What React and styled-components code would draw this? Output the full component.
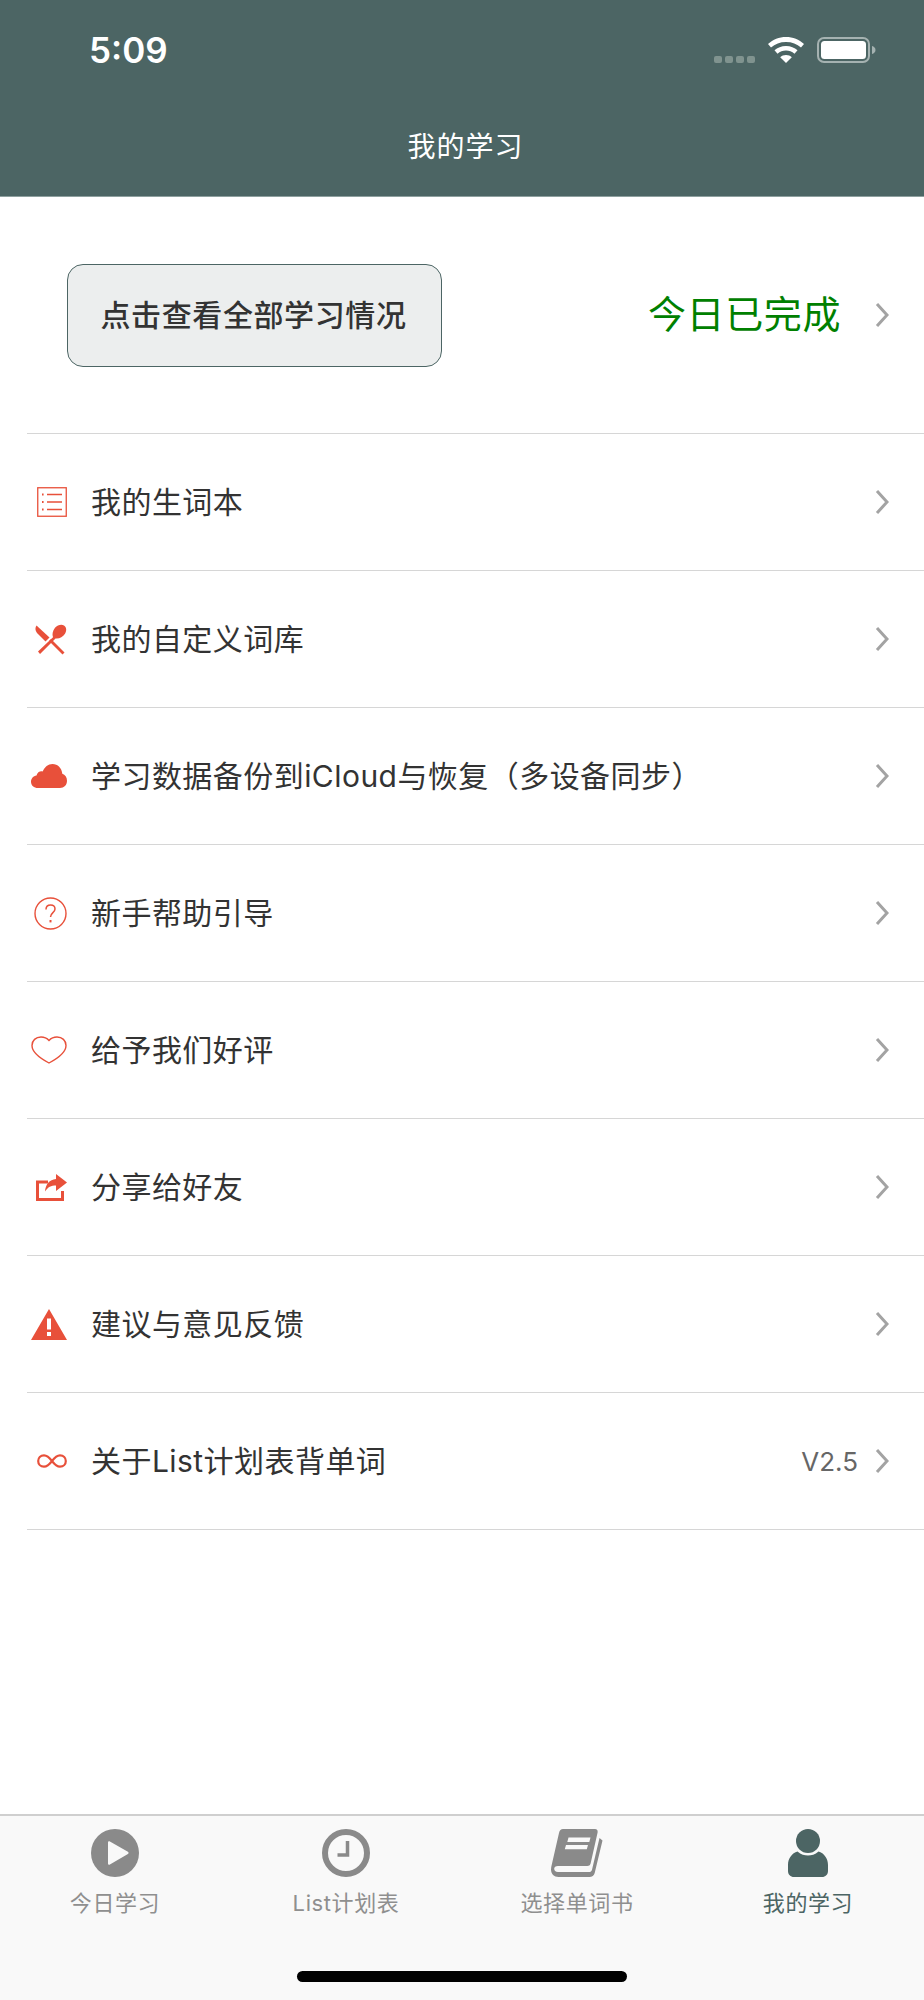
import React from "react";
import styled, { createGlobalStyle } from "styled-components";

const FONT = `Inter, "Noto Sans CJK SC", sans-serif`;
const RED = "#e8503a";
const GREY = "#8a8a8a";
const TEAL = "#4c6564";

const GlobalStyle = createGlobalStyle`
  html, body {
    margin: 0;
    padding: 0;
    background: #fff;
  }
  * {
    box-sizing: border-box;
  }
`;

const Page = styled.div`
  width: 924px;
  height: 2000px;
  display: flex;
  flex-direction: column;
  font-family: ${FONT};
  background: #fff;
  color: #333;
`;

const Header = styled.header`
  height: 197px;
  flex-shrink: 0;
  background: ${TEAL};
  border-bottom: 1px solid #8ea09f;
  color: #fff;
`;

const StatusBar = styled.div`
  height: 127px;
  padding: 32px 48px 0 89px;
  display: flex;
  justify-content: space-between;
  align-items: flex-start;
`;

const Clock = styled.div`
  font-size: 35px;
  line-height: 36px;
  font-weight: 600;
`;

const StatusIcons = styled.div`
  display: flex;
  align-items: flex-end;
  padding-top: 5px;
`;

const Dots = styled.div`
  display: flex;
  gap: 3px;
  margin-right: 13px;
`;

const Dot = styled.span`
  width: 8px;
  height: 7px;
  border-radius: 2px;
  background: #80938f;
`;

const Title = styled.h1`
  margin: 0;
  padding-left: 7px;
  text-align: center;
  font-size: 28px;
  line-height: 40px;
  font-weight: 400;
  letter-spacing: 1px;
`;

const Main = styled.main`
  flex: 1;
`;

const Summary = styled.section`
  height: 237px;
  margin-left: 27px;
  padding: 0 35px 0 40px;
  display: flex;
  align-items: center;
  border-bottom: 1px solid #d6d6d6;
`;

const ReportButton = styled.button`
  width: 375px;
  height: 103px;
  padding: 0 2px 4px 0;
  border: 1px solid ${TEAL};
  border-radius: 16px;
  background: #eceeee;
  color: #333;
  font-family: ${FONT};
  font-size: 30px;
  font-weight: 500;
  letter-spacing: 0.6px;
`;

const Done = styled.div`
  margin-left: auto;
  margin-right: 34px;
  padding-bottom: 3px;
  color: #008000;
  font-size: 38px;
  line-height: 50px;
  letter-spacing: 0.6px;
`;

const Row = styled.div`
  height: 137px;
  margin-left: 27px;
  padding-right: 35px;
  display: flex;
  align-items: center;
  border-bottom: 1px solid #d6d6d6;
`;

const IconSlot = styled.div`
  width: 40px;
  margin-right: 24px;
  display: flex;
  justify-content: flex-end;
  align-items: center;
`;

const Label = styled.div`
  flex: 1;
  font-size: 30px;
  line-height: 40px;
  letter-spacing: 0.45px;
`;

const Version = styled.div`
  margin-right: 17px;
  color: #666;
  font-size: 26px;
`;

const TabBar = styled.nav`
  height: 186px;
  flex-shrink: 0;
  padding-top: 13px;
  border-top: 2px solid #cfcfcf;
  background: #f9f9f9;
  display: flex;
  flex-direction: column;
`;

const Tabs = styled.div`
  display: grid;
  grid-template-columns: repeat(4, 1fr);
`;

const Tab = styled.div`
  display: flex;
  flex-direction: column;
  align-items: center;
  gap: 12px;
  margin-left: -1px;
  color: ${(p) => (p.$active ? TEAL : "#8f8f8f")};
  font-size: 22px;
  line-height: 28px;
  letter-spacing: 0.6px;
`;

const TabIcon = styled.div`
  height: 48px;
  display: flex;
  align-items: center;
  justify-content: center;
`;

const HomeBar = styled.div`
  width: 330px;
  height: 11px;
  margin: auto auto 18px;
  border-radius: 6px;
  background: #000;
`;

const Chevron = () => (
  <svg width="14" height="26" viewBox="0 0 14 26" fill="none">
    <path d="M2 2l10 11L2 24" stroke="#a3a3a3" strokeWidth="3" />
  </svg>
);

const Wifi = () => (
  <svg width="36" height="26" viewBox="0 0 36 26" fill="#fff">
    <path d="M18 0C11 0 5 2.600 0 7l3 3.500C7 7 12 5 18 5s11 2 15 5.500L36 7C31 2.600 25 0 18 0z" />
    <path d="M18 9c-4.600 0-8.500 1.600-11.500 4.300l3 3.400C12 14.700 14.800 13.600 18 13.600s6 1.100 8.500 3.100l3-3.400C26.500 10.600 22.600 9 18 9z" />
    <path d="M18 18c-2.300 0-4.300 .8-5.800 2.200L18 26l5.800-5.800C22.300 18.800 20.300 18 18 18z" />
  </svg>
);

const Battery = () => (
  <svg width="59" height="26" viewBox="0 0 59 26" fill="none" style={{ marginLeft: 13 }}>
    <rect x="1" y="1" width="51" height="24" rx="6" stroke="#a5b2b1" strokeWidth="2" />
    <rect x="4" y="4" width="45" height="18" rx="3.500" fill="#fff" />
    <path d="M55 9c2 .5 3.500 2 3.500 4s-1.500 3.500-3.500 4z" fill="#a5b2b1" />
  </svg>
);

const ListIcon = () => (
  <svg width="30" height="30" viewBox="0 0 30 30" fill="none" stroke={RED}>
    <rect x="0.750" y="0.750" width="28.500" height="28.500" strokeWidth="1.300" />
    <path d="M10 7.500h15M10 15h15M10 22.500h15" strokeWidth="1.300" />
    <path d="M5 7.500h1.600M5 15h1.600M5 22.500h1.600" strokeWidth="2" />
  </svg>
);

const CutleryIcon = () => (
  <svg width="33" height="31" viewBox="0 0 31 31" fill={RED}>
    <path d="M1.500 1.500c-1.500 2-1.500 5 .5 7.500l8.500 8.500 4-4z" />
    <path d="M14 17l2-2 13.500 13.500-2 2z" />
    <path d="M3 27.500l15-14.200c-1-3-.5-6 2-9.500C22.500 1 26.500 0 29 1.500s3 5 1 8.200c-2.300 3.500-5.800 5.200-9.500 4.700L5 30z" />
  </svg>
);

const CloudIcon = () => (
  <svg width="36" height="24" viewBox="0 0 36 24" fill={RED}>
    <path d="M7 24C3 24 0 21.500 0 17.700c0-3.400 2.400-5.900 5.500-6.300C6.300 8.500 9 6.800 11.700 7.500 13.500 3 17.200 0 21.500 0c5.300 0 9.300 4 9.800 9.800 2.800 1 4.700 3.600 4.700 7 0 4.200-3 7.200-7 7.200z" />
  </svg>
);

const HelpIcon = () => (
  <svg width="33" height="33" viewBox="0 0 33 33" fill="none" stroke={RED}>
    <circle cx="16.500" cy="16.500" r="15.500" strokeWidth="1.400" />
    <path d="M12 12.500c0-2.800 2-4.500 4.600-4.500s4.400 1.700 4.400 4c0 3.600-4.500 3.700-4.500 8" strokeWidth="1.500" />
    <path d="M16.500 23v2.400" strokeWidth="2" />
  </svg>
);

const HeartIcon = () => (
  <svg width="36" height="28" viewBox="0 0 36 28" fill="none" stroke={RED} strokeWidth="1.400">
    <path d="M18 4.500C15.500 1.700 13 1 10 1 4.800 1 1 4.500 1 9.500c0 7 8.500 13 17 17.500 8.500-4.500 17-10.500 17-17.500C35 4.500 31.200 1 26 1c-3 0-5.500.7-8 3.500z" />
  </svg>
);

const ShareIcon = () => (
  <svg width="31" height="27" viewBox="0 0 31 27" fill="none">
    <path d="M12 8H1.500v17.500h25V17" stroke={RED} strokeWidth="3" />
    <path d="M20 0l11 8.500L20 17v-5.500c-5 0-8 1.500-11 6 .5-7 4.500-12 11-12.500z" fill={RED} />
  </svg>
);

const WarningIcon = () => (
  <svg width="36" height="31" viewBox="0 0 36 31" fill={RED}>
    <path fillRule="evenodd" d="M18 0l18 31H0zM16 9.500v11h4v-11zM16 23v4h4v-4z" />
  </svg>
);

const InfinityIcon = () => (
  <svg width="30" height="14" viewBox="0 0 30 14" fill="none" stroke={RED} strokeWidth="2.200">
    <path d="M15 7c-2.500-3.400-4.800-5.700-8-5.700C3.500 1.300 1.200 3.700 1.200 7s2.300 5.700 5.800 5.700c3.200 0 5.500-2.300 8-5.700s4.800-5.700 8-5.700c3.500 0 5.800 2.400 5.800 5.700s-2.300 5.700-5.800 5.700c-3.200 0-5.500-2.300-8-5.700z" />
  </svg>
);

const PlayIcon = () => (
  <svg width="48" height="48" viewBox="0 0 48 48">
    <circle cx="24" cy="24" r="24" fill={GREY} />
    <path d="M17 13.500c0-1 1-1.600 1.900-1.100l18 10.400c.9.500.9 1.800 0 2.300l-18 10.500c-.9.500-1.900-.1-1.900-1.100z" fill="#f9f9f9" />
  </svg>
);

const ClockIcon = () => (
  <svg width="48" height="48" viewBox="0 0 48 48" fill="none">
    <circle cx="24" cy="24" r="21" stroke={GREY} strokeWidth="6" />
    <path d="M25.500 12v14H15.500" stroke={GREY} strokeWidth="3.500" />
  </svg>
);

const BookIcon = () => (
  <svg width="52" height="48" viewBox="0 0 52 48">
    <path d="M12 0h32c2 0 3 1.500 2.600 3.500l-7 31c-.4 1.700-1.700 2.500-3.300 2.500H7c-2.500 0-3.800 1.200-3.800 2.800S4.500 43 7 43h31c1.500 0 2.600-.8 3-2.300L48.500 9l3 2.500-7.800 32.500C43 46.700 41 48 38.500 48H7.500C3 48 0 45 0 40.500 0 38.800.4 37 .8 35.500L8 4c.5-2.500 2-4 4-4z" fill={GREY} />
    <path d="M17.500 8.500h22l-1.200 4.500h-22zM15 16h22l-1.200 4.200h-22z" fill="#f9f9f9" />
  </svg>
);

const UserIcon = () => (
  <svg width="40" height="48" viewBox="0 0 40 48" fill={TEAL}>
    <circle cx="20" cy="12" r="12" />
    <path d="M9.500 22.500C13 25.500 16.500 26.500 20 26.500s7-1 10.500-4c5.500 1.500 9.500 7 9.500 13.500v6c0 3.500-2.500 6-6 6H6c-3.500 0-6-2.500-6-6v-6c0-6.500 4-12 9.500-13.500z" />
  </svg>
);

const rows = [
  { icon: <ListIcon />, label: "我的生词本" },
  { icon: <CutleryIcon />, label: "我的自定义词库" },
  { icon: <CloudIcon />, label: "学习数据备份到iCloud与恢复（多设备同步）" },
  { icon: <HelpIcon />, label: "新手帮助引导" },
  { icon: <HeartIcon />, label: "给予我们好评" },
  { icon: <ShareIcon />, label: "分享给好友" },
  { icon: <WarningIcon />, label: "建议与意见反馈" },
  { icon: <InfinityIcon />, label: "关于List计划表背单词", version: "V2.5" },
];

const tabs = [
  { icon: <PlayIcon />, label: "今日学习" },
  { icon: <ClockIcon />, label: "List计划表" },
  { icon: <BookIcon />, label: "选择单词书" },
  { icon: <UserIcon />, label: "我的学习", active: true },
];

const App = () => {
  return (
    <Page>
      <GlobalStyle />
      <Header>
        <StatusBar>
          <Clock>5:09</Clock>
          <StatusIcons>
            <Dots>
              <Dot />
              <Dot />
              <Dot />
              <Dot />
            </Dots>
            <Wifi />
            <Battery />
          </StatusIcons>
        </StatusBar>
        <Title>我的学习</Title>
      </Header>
      <Main>
        <Summary>
          <ReportButton>点击查看全部学习情况</ReportButton>
          <Done>今日已完成</Done>
          <Chevron />
        </Summary>
        {rows.map((e) => (
          <Row key={e.label}>
            <IconSlot>{e.icon}</IconSlot>
            <Label>{e.label}</Label>
            {e.version && <Version>{e.version}</Version>}
            <Chevron />
          </Row>
        ))}
      </Main>
      <TabBar>
        <Tabs>
          {tabs.map((e) => (
            <Tab key={e.label} $active={e.active}>
              <TabIcon>{e.icon}</TabIcon>
              {e.label}
            </Tab>
          ))}
        </Tabs>
        <HomeBar />
      </TabBar>
    </Page>
  );
};

export default App;
